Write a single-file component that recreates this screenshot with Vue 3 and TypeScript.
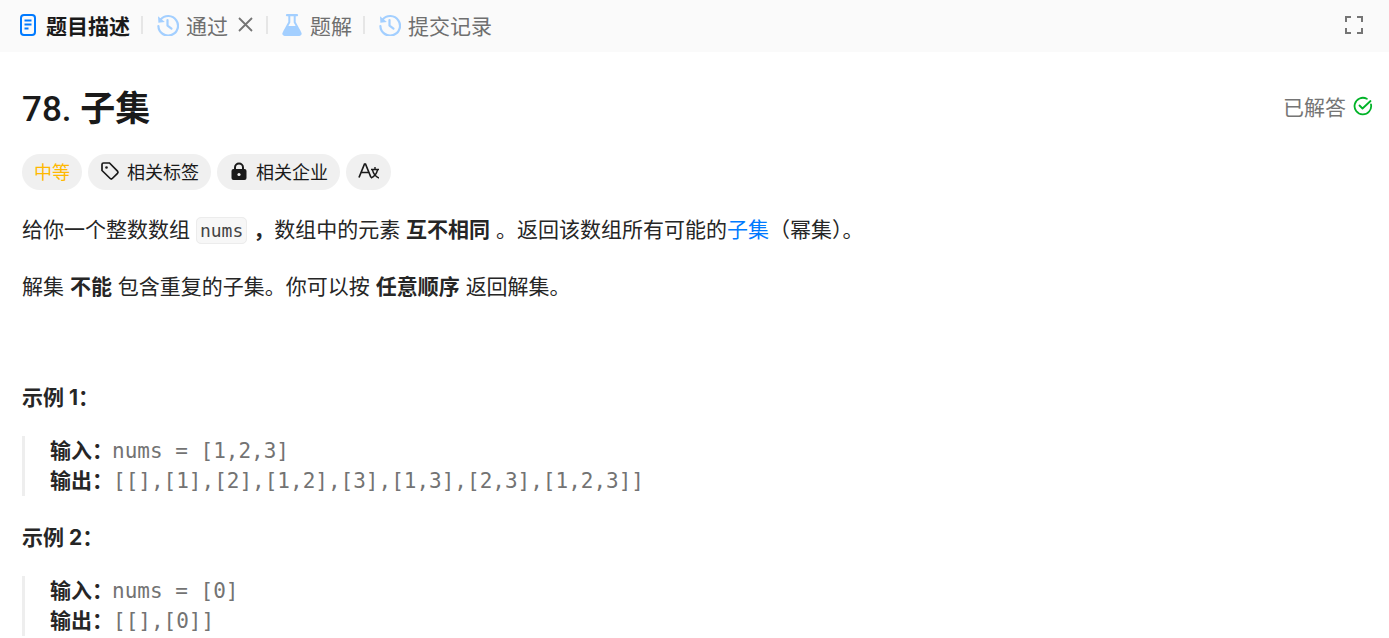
<script setup lang="ts">
type Tab = { label: string; icon: "doc" | "history" | "flask"; active?: boolean; closable?: boolean };

const tabs: Tab[] = [
  { label: "题目描述", icon: "doc", active: true },
  { label: "通过", icon: "history", closable: true },
  { label: "题解", icon: "flask" },
  { label: "提交记录", icon: "history" }
];

const examples = [
  { title: "示例 1\uFF1A", input: "nums = [1,2,3]", output: "[[],[1],[2],[1,2],[3],[1,3],[2,3],[1,2,3]]" },
  { title: "示例 2\uFF1A", input: "nums = [0]", output: "[[],[0]]" }
];
</script>

<template>
  <div class="page">
    <div class="tabbar">
      <template v-for="(tab, idx) in tabs" :key="tab.label">
        <span v-if="idx > 0" class="divider" />
        <div class="tab" :class="{ 'is-active': tab.active }">
          <svg v-if="tab.icon === 'doc'" class="tab-icon doc" viewBox="0 0 16 22" fill="none">
            <rect x="1" y="1" width="14" height="20" rx="3" stroke="#007aff" stroke-width="2" />
            <path d="M4.500 6.500h7M4.500 10.500h7M4.500 14.500h4" stroke="#007aff" stroke-width="2" />
          </svg>
          <svg v-else-if="tab.icon === 'history'" class="tab-icon" viewBox="0 0 22 22" fill="none">
            <path d="M3.600 5.600A9.800 9.800 0 1 1 1.400 12" stroke="#a3cfff" stroke-width="2.200" stroke-linecap="round" />
            <path d="M1 2.200 1.400 8.800l6.400-.8z" fill="#a3cfff" />
            <path d="M10.500 6v5.600l4 3" stroke="#a3cfff" stroke-width="2.200" stroke-linecap="round" stroke-linejoin="round" />
          </svg>
          <svg v-else class="tab-icon flask" viewBox="0 0 20 22" fill="none">
            <path d="M5 1.200h10" stroke="#a3cfff" stroke-width="2.200" stroke-linecap="round" />
            <path d="M7.300 1.500v6.800L2 18M12.700 1.500v6.800L18 18" stroke="#a3cfff" stroke-width="2" />
            <path d="M5.500 12h9l4.800 6.500A2.300 2.300 0 0 1 17.300 22H2.700A2.300 2.300 0 0 1 .7 18.500z" fill="#a3cfff" />
          </svg>
          <span>{{ tab.label }}</span>
          <svg v-if="tab.closable" class="close" viewBox="0 0 15 15" fill="none">
            <path d="M1 1l13 13M14 1 1 14" stroke="#757575" stroke-width="1.800" />
          </svg>
        </div>
      </template>
      <svg class="expand" viewBox="0 0 18 18" fill="none">
        <path d="M1 6V1h5M12 1h5v5M17 12v5h-5M6 17H1v-5" stroke="#757575" stroke-width="2" />
      </svg>
    </div>

    <div class="content">
      <div class="title-row">
        <h1 class="title">78. <span>子集</span></h1>
        <div class="solved">
          <span>已解答</span>
          <svg viewBox="0 0 20 20" fill="none">
            <path d="M18 8.500A8.300 8.300 0 1 1 13.800 2.800" stroke="#01b328" stroke-width="1.800" stroke-linecap="round" />
            <path d="M6.500 9.500l3 3L17.500 5" stroke="#01b328" stroke-width="1.800" stroke-linecap="round" stroke-linejoin="round" />
          </svg>
        </div>
      </div>

      <div class="chips">
        <span class="chip level">中等</span>
        <span class="chip">
          <svg viewBox="0 0 20 20" fill="none">
            <path d="M2 3.500A1.500 1.500 0 0 1 3.500 2h6l8 8.200a1.500 1.500 0 0 1 0 2.100l-5.200 5.200a1.500 1.500 0 0 1-2.100 0L2 9.500z" stroke="#1a1a1a" stroke-width="1.700" />
            <circle cx="6.500" cy="6.500" r="1.300" fill="#1a1a1a" />
          </svg>
          相关标签
        </span>
        <span class="chip">
          <svg viewBox="0 0 20 20" fill="none">
            <path d="M6 9V6.500a4 4 0 0 1 8 0V9" stroke="#1a1a1a" stroke-width="2" />
            <rect x="2.500" y="8" width="15" height="11" rx="2" fill="#1a1a1a" />
            <circle cx="10" cy="13.500" r="1.600" fill="#f0f0f0" />
          </svg>
          相关企业
        </span>
        <span class="chip translate">
          <svg viewBox="0 0 21 18" fill="none">
            <path d="M1 15.500 6.500 2h1l5.500 13.500M3 10.500h8" stroke="#1a1a1a" stroke-width="1.700" />
            <path d="M13 7.500h8M17 5v2.500M14.500 8c.8 3.500 3 6.500 6.500 8M19.500 8c-.8 3.500-3 6.500-6.500 8" stroke="#1a1a1a" stroke-width="1.400" />
          </svg>
        </span>
      </div>

      <div class="desc">
        <p>给你一个整数数组 <code>nums</code> <b>&#xFF0C;</b>数组中的元素 <b>互不相同</b> 。返回该数组所有可能的<a>子集</a>&#xFF08;幂集&#xFF09;。</p>
        <p>解集 <b>不能</b> 包含重复的子集。你可以按 <b>任意顺序</b> 返回解集。</p>
      </div>

      <section v-for="ex in examples" :key="ex.title" class="example">
        <h4>{{ ex.title }}</h4>
        <pre><b>输入&#xFF1A;</b><span class="shift">{{ ex.input }}</span>
<b>输出&#xFF1A;</b>{{ ex.output }}</pre>
      </section>
    </div>
  </div>
</template>

<style scoped>
.page {
  width: 1389px;
  height: 638px;
  overflow: hidden;
  background: #fff;
  font-family: Inter, "Noto Sans CJK SC", sans-serif;
  color: #262626;
}

.tabbar {
  height: 52px;
  box-sizing: border-box;
  padding: 0 26px 3px 20px;
  background: #fafafa;
  display: flex;
  align-items: center;
  font-size: 21px;
  color: #6f6f6f;
}

.tab {
  display: flex;
  align-items: center;
  gap: 7px;
  white-space: nowrap;
}

.tab.is-active {
  font-weight: 700;
  color: #1a1a1a;
}

.tab-icon {
  width: 22px;
  height: 22px;
  flex: none;
}

.tab-icon.doc {
  width: 16px;
  margin-right: 3px;
}

.tab-icon.flask {
  width: 20px;
  margin-right: 1px;
}

.divider {
  width: 2px;
  height: 18px;
  margin: 0 14px 0 11px;
  background: #e6e6e6;
}

.close {
  width: 15px;
  height: 15px;
  margin-left: 3px;
  margin-right: 2px;
}

.expand {
  width: 18px;
  height: 18px;
  margin-left: auto;
}

.content {
  padding: 0 16px 0 22px;
}

.title-row {
  height: 102px;
  box-sizing: border-box;
  padding-top: 5px;
  display: flex;
  align-items: center;
  justify-content: space-between;
}

.title {
  margin: 0;
  font-family: Roboto, "Noto Sans CJK SC", sans-serif;
  font-size: 35px;
  font-weight: 500;
  color: #1a1a1a;
}

.title span {
  font-weight: 700;
}

.solved {
  display: flex;
  align-items: center;
  gap: 7px;
  font-size: 21px;
  color: #757575;
  margin-top: 1px;
}

.solved svg {
  width: 20px;
  height: 20px;
}

.chips {
  display: flex;
  gap: 6px;
}

.chip {
  height: 36px;
  box-sizing: border-box;
  padding: 0 12px 2px;
  border-radius: 18px;
  background: #f0f0f0;
  display: flex;
  align-items: center;
  gap: 7px;
  font-size: 18px;
  color: #1a1a1a;
}

.chip svg {
  width: 20px;
  height: 20px;
}

.translate svg {
  width: 21px;
  height: 18px;
}

.level {
  color: #ffb800;
}

.desc {
  margin-top: 23px;
  font-size: 21px;
  line-height: 34px;
}

.desc p {
  margin: 0 0 22px;
}

.desc a {
  color: #007aff;
}

code {
  font-family: "DejaVu Sans Mono", monospace;
  font-size: 18px;
  padding: 2px 3px;
  border: 1px solid #ececec;
  border-radius: 5px;
  background: #f7f7f7;
  color: #444;
}

.example h4 {
  margin: 0;
  font-size: 21px;
  line-height: 30px;
  font-weight: 700;
}

.desc + .example {
  margin-top: 79px;
}

pre {
  margin: 23px 0 27px;
  padding: 0 0 0 25px;
  border-left: 3px solid #eeeeee;
  font-family: "DejaVu Sans Mono", monospace;
  font-size: 21px;
  line-height: 30px;
  color: #737373;
}

pre b {
  font-family: Inter, "Noto Sans CJK SC", sans-serif;
  color: #262626;
}

.shift {
  margin-left: -1px;
}
</style>
